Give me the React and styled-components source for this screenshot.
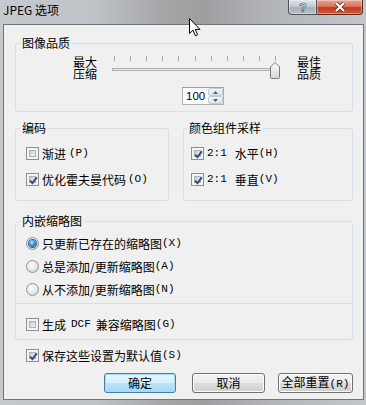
import React from "react";
import styled, { createGlobalStyle } from "styled-components";

const GlobalStyle = createGlobalStyle`
  html, body {
    margin: 0;
    padding: 0;
  }
  body {
    font-family: "Noto Sans CJK SC", "Noto Sans", sans-serif;
    font-size: 12px;
    color: #000;
  }
`;

const Frame = styled.div`
  position: relative;
  width: 366px;
  height: 405px;
  display: flex;
  flex-direction: column;
  overflow: hidden;
  background: linear-gradient(
    90deg,
    #c6cacf 0%,
    #bfc3c7 25%,
    #a4a6a8 45%,
    #9d9ea0 55%,
    #b3b6b9 75%,
    #c3c6ca 100%
  );
`;

const TitleBar = styled.div`
  height: 24px;
  display: flex;
  align-items: flex-start;
  padding-left: 3px;
`;

const Title = styled.span`
  margin-top: 2px;
  line-height: 16px;
  font-size: 12px;
`;

const CaptionButtons = styled.div`
  margin-left: auto;
  margin-right: 3px;
  display: flex;
`;

const CaptionButton = styled.div`
  width: ${(p) => p.$w}px;
  height: 15px;
  box-sizing: border-box;
  display: flex;
  align-items: center;
  justify-content: center;
  border: 1px solid ${(p) => (p.$close ? "#5a2a22" : "#4e535a")};
  border-top: none;
  border-radius: ${(p) => (p.$close ? "0 0 4px 0" : "0 0 0 4px")};
  border-left: ${(p) => (p.$close ? "none" : "1px solid #4e535a")};
  background: ${(p) =>
    p.$close
      ? "linear-gradient(#e7a394 0%, #d9765e 45%, #c2391c 55%, #d55a38 100%)"
      : "linear-gradient(#dfe3e8 0%, #c4c9cf 45%, #aab0b8 55%, #b9bfc6 100%)"};
  box-shadow: inset 0 0 0 1px rgba(255, 255, 255, 0.35);
`;

const Client = styled.div`
  margin: 0 2px 0 3px;
  height: 376px;
  box-sizing: border-box;
  border: 1px solid #70757b;
  background: #f0f0f0;
  padding: 0 10px 0 11px;
  display: flex;
  flex-direction: column;
`;

const Group = styled.fieldset`
  margin: ${(p) => p.$top || 0}px 0 0;
  padding: 0;
  min-width: 0;
  width: ${(p) => (p.$w ? `${p.$w}px` : "auto")};
  box-sizing: border-box;
  border: 1px solid #d5dfe5;
  border-radius: 3px;
`;

const Legend = styled.legend`
  margin-left: ${(p) => p.$ml || 4}px;
  padding: 0 2px;
  line-height: 14px;
  font-size: 12px;
`;

const QualityRow = styled.div`
  margin-top: 6px;
  height: 24px;
  display: flex;
  align-items: center;
  padding-left: 57px;
`;

const ScaleLabel = styled.div`
  width: 24px;
  line-height: 12px;
  font-size: 12px;
  margin-left: ${(p) => p.$ml || 0}px;
`;

const SliderArt = styled.svg`
  display: block;
  margin-left: 10px;
  flex: none;
`;

const SpinRow = styled.div`
  margin: 7px 0 6px 166px;
  display: flex;
`;

const SpinBox = styled.div`
  width: 42px;
  height: 18px;
  box-sizing: border-box;
  display: flex;
  border: 1px solid #abadb3;
  border-top-color: #9da0a7;
  background: #fff;
`;

const SpinText = styled.span`
  flex: 1;
  padding-left: 3px;
  line-height: 16px;
  font-family: "Liberation Sans", Arial, sans-serif;
  font-size: 11.5px;
`;

const SpinButtons = styled.div`
  width: 15px;
  display: flex;
  flex-direction: column;
`;

const SpinHalf = styled.div`
  flex: 1;
  display: flex;
  align-items: center;
  justify-content: center;
  border: 1px solid #c3ccd5;
  border-radius: 2px;
  background: linear-gradient(#f3f6f9, #dbe3ea);
`;

const GroupRow = styled.div`
  margin-top: 9px;
  display: flex;
  gap: 14px;
`;

const GroupBody = styled.div`
  display: flex;
  flex-direction: column;
  gap: ${(p) => p.$gap}px;
  padding: ${(p) => p.$pad};
`;

const Option = styled.label`
  height: 16px;
  display: flex;
  align-items: center;
  white-space: nowrap;
  padding-left: ${(p) => p.$pl || 0}px;
  margin-top: ${(p) => p.$mt || 0}px;
`;

const Box = styled.span`
  position: relative;
  width: 13px;
  height: 13px;
  box-sizing: border-box;
  margin-right: 3px;
  flex: none;
  display: flex;
  padding: 2px;
  border: 1px solid #8e8f8f;
  background: #f4f4f4;
  &::before {
    content: "";
    flex: 1;
    border: 1px solid #adb2b8;
    background: linear-gradient(135deg, #c4c9cf 0%, #e6e8ea 70%, #f4f4f4 100%);
  }
`;

const Tick = styled.svg`
  position: absolute;
  left: 1px;
  top: 1px;
`;

const Radio = styled.span`
  width: 13px;
  height: 13px;
  box-sizing: border-box;
  margin-right: 3px;
  flex: none;
  display: flex;
  align-items: center;
  justify-content: center;
  border-radius: 50%;
  border: 1px solid #8e9396;
  background: radial-gradient(circle at 40% 35%, #fdfdfd 0%, #e4e6e8 55%, #c4c7ca 100%);
  &::after {
    content: "";
    display: ${(p) => (p.$on ? "block" : "none")};
    width: 7px;
    height: 7px;
    border-radius: 50%;
    background: radial-gradient(circle at 40% 35%, #c2ecff 0%, #3d93d6 45%, #1b4f8d 100%);
    box-shadow: 0 0 0 1px #2a5d93;
  }
`;

const Latin = styled.span`
  font-family: "Liberation Mono", "DejaVu Sans Mono", monospace;
  font-size: 11px;
  margin: 0 ${(p) => p.$r ?? p.$gap ?? 0}px 0 ${(p) => p.$gap || 0}px;
`;

const Divider = styled.div`
  height: 1px;
  background: #d5dfe5;
  margin: 6px 0 12px -10px;
`;

const SaveRow = styled(Option)`
  margin-top: 7px;
  padding-left: 11px;
`;

const ButtonRow = styled.div`
  margin-top: 10px;
  display: flex;
  justify-content: flex-end;
`;

const Button = styled.button`
  width: ${(p) => p.$w}px;
  height: 20px;
  margin: 0 0 0 ${(p) => p.$ml || 0}px;
  padding: 0;
  box-sizing: border-box;
  font-family: inherit;
  font-size: 12px;
  line-height: 16px;
  color: #000;
  white-space: nowrap;
  border-radius: 3px;
  border: 1px solid ${(p) => (p.$primary ? "#3c7fb1" : "#707070")};
  background: ${(p) =>
    p.$primary
      ? "linear-gradient(#e8f6fd 0%, #d6effc 50%, #bde4f8 50%, #a6d9f4 100%)"
      : "linear-gradient(#f2f2f2 0%, #ebebeb 50%, #dddddd 50%, #cfcfcf 100%)"};
  box-shadow: inset 0 0 0 1px ${(p) => (p.$primary ? "#9fe0fb" : "#fcfcfc")};
`;

const Cursor = styled.svg`
  position: absolute;
  left: 189px;
  top: 18px;
`;

const CheckBox = ({ checked }) => (
  <Box>
    {checked && (
      <Tick width="11" height="11" viewBox="0 0 11 11">
        <path d="M2.2 5.6 L4.4 8.2 L8.8 2.4" fill="none" stroke="#4a5f9a" strokeWidth="2" />
        <path d="M2.2 5.6 L4.4 8.2 L8.8 2.4" fill="none" stroke="#1d2c5c" strokeWidth="0.8" />
      </Tick>
    )}
  </Box>
);

const ticks = Array.from({ length: 11 }, (_, i) => Math.round(7 + i * 16.1) + 0.5);

const Slider = () => (
  <SliderArt width="178" height="24" viewBox="0 0 178 24">
    <defs>
      <linearGradient id="thumb" x1="0" y1="0" x2="0" y2="1">
        <stop offset="0" stopColor="#fbfbfb" />
        <stop offset="1" stopColor="#d4d6d8" />
      </linearGradient>
    </defs>
    {ticks.map((x) => (
      <line key={x} x1={x} y1="0" x2={x} y2="5" stroke="#a9a9a9" />
    ))}
    <rect x="5.5" y="12.5" width="167" height="2" fill="#e8e9ea" stroke="#b0b0b0" />
    <path
      d="M168 6.5 L172.5 11 L172.5 21.5 Q172.5 22.5 171.5 22.5 L164.5 22.5 Q163.5 22.5 163.5 21.5 L163.5 11 Z"
      fill="url(#thumb)"
      stroke="#7a7c7e"
    />
  </SliderArt>
);

const App = () => (
  <>
    <GlobalStyle />
    <Frame>
      <TitleBar>
        <Title>JPEG 选项</Title>
        <CaptionButtons>
          <CaptionButton $w={29}>
            <svg width="10" height="12" viewBox="0 0 10 12">
              <text
                x="5"
                y="10.5"
                textAnchor="middle"
                fontFamily="Liberation Sans, Arial, sans-serif"
                fontWeight="bold"
                fontSize="12"
                fill="#fff"
                stroke="#3b3f45"
                strokeWidth="0.6"
              >
                ?
              </text>
            </svg>
          </CaptionButton>
          <CaptionButton $w={46} $close>
            <svg width="12" height="10" viewBox="0 0 12 10">
              <path d="M2 1 L10 9 M10 1 L2 9" stroke="#5a1c10" strokeWidth="3.6" />
              <path d="M2 1 L10 9 M10 1 L2 9" stroke="#fff" strokeWidth="2.2" />
            </svg>
          </CaptionButton>
        </CaptionButtons>
      </TitleBar>

      <Client>
        <Group $top={11}>
          <Legend>图像品质</Legend>
          <QualityRow>
            <ScaleLabel>
              最大
              <br />
              压缩
            </ScaleLabel>
            <Slider />
            <ScaleLabel $ml={12}>
              最佳
              <br />
              品质
            </ScaleLabel>
          </QualityRow>
          <SpinRow>
            <SpinBox>
              <SpinText>100</SpinText>
              <SpinButtons>
                <SpinHalf>
                  <svg width="5" height="3" viewBox="0 0 5 3">
                    <path d="M0 3 L2.5 0 L5 3 Z" fill="#4d5f7e" />
                  </svg>
                </SpinHalf>
                <SpinHalf>
                  <svg width="5" height="3" viewBox="0 0 5 3">
                    <path d="M0 0 L2.5 3 L5 0 Z" fill="#4d5f7e" />
                  </svg>
                </SpinHalf>
              </SpinButtons>
            </SpinBox>
          </SpinRow>
        </Group>

        <GroupRow>
          <Group $w={154}>
            <Legend>编码</Legend>
            <GroupBody $gap={10} $pad="10px 0 13px 10px">
              <Option>
                <CheckBox />
                渐进<Latin $gap={3}>(P)</Latin>
              </Option>
              <Option>
                <CheckBox checked />
                优化霍夫曼代码<Latin $gap={2}>(O)</Latin>
              </Option>
            </GroupBody>
          </Group>
          <Group $w={170}>
            <Legend $ml={3}>颜色组件采样</Legend>
            <GroupBody $gap={10} $pad="10px 0 13px 7px">
              <Option>
                <CheckBox checked />
                <Latin $gap={0} $r={8}>2:1</Latin>水平<Latin>(H)</Latin>
              </Option>
              <Option>
                <CheckBox checked />
                <Latin $gap={0} $r={8}>2:1</Latin>垂直<Latin>(V)</Latin>
              </Option>
            </GroupBody>
          </Group>
        </GroupRow>

        <Group $top={13}>
          <Legend>内嵌缩略图</Legend>
          <GroupBody $gap={7} $pad="7px 0 0 10px">
            <Option>
              <Radio $on />
              只更新已存在的缩略图<Latin>(X)</Latin>
            </Option>
            <Option>
              <Radio />
              总是添加/更新缩略图<Latin>(A)</Latin>
            </Option>
            <Option>
              <Radio />
              从不添加/更新缩略图<Latin>(N)</Latin>
            </Option>
          </GroupBody>
          <GroupBody $gap={0} $pad="0 0 7px 10px">
            <Divider />
            <Option>
              <CheckBox />
              生成<Latin $gap={5}>DCF</Latin>兼容缩略图<Latin>(G)</Latin>
            </Option>
          </GroupBody>
        </Group>

        <SaveRow>
          <CheckBox checked />
          保存这些设置为默认值<Latin>(S)</Latin>
        </SaveRow>

        <ButtonRow>
          <Button $w={72} $primary>
            确定
          </Button>
          <Button $w={73} $ml={16}>
            取消
          </Button>
          <Button $w={75} $ml={13}>
            全部重置<Latin>(R)</Latin>
          </Button>
        </ButtonRow>
      </Client>

      <Cursor width="12" height="19" viewBox="0 0 12 19">
        <path
          d="M0.5 0.5 L0.5 15.5 L4 12.2 L6.4 17.8 L8.6 16.8 L6.3 11.4 L11 11.4 Z"
          fill="#fff"
          stroke="#000"
          strokeLinejoin="round"
        />
      </Cursor>
    </Frame>
  </>
);

export default App;
